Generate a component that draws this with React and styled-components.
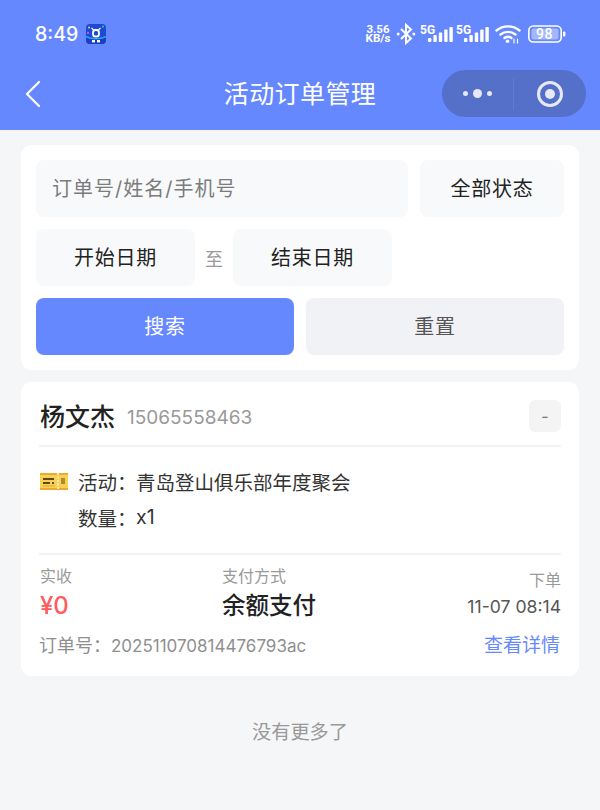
import React from "react";
import styled, { createGlobalStyle } from "styled-components";

const BLUE = "#6688ff";
const FONT = `Inter, "Noto Sans CJK SC", "Noto Sans", sans-serif`;
const COLON = "\uFF1A";

const GlobalStyle = createGlobalStyle`
  html, body {
    margin: 0;
    padding: 0;
    background: #f5f6f8;
    font-family: ${FONT};
  }
  * { box-sizing: border-box; }
`;

const Page = styled.div`
  width: 600px;
  height: 810px;
  overflow: hidden;
  background: #f5f6f8;
`;

const Header = styled.header`
  height: 130px;
  background: ${BLUE};
  color: #fff;
`;

const StatusBar = styled.div`
  height: 68px;
  padding: 22px 34px 0 35px;
  display: flex;
  align-items: flex-start;
  justify-content: space-between;
`;

const StatusLeft = styled.div`
  display: flex;
  align-items: center;
  gap: 8px;
  height: 24px;
`;

const Clock = styled.span`
  font-size: 19.5px;
  font-weight: 500;
`;

const StatusRight = styled.div`
  display: flex;
  align-items: center;
  height: 24px;
  gap: 4px;
`;

const NetSpeed = styled.div`
  font-family: Roboto, sans-serif;
  font-size: 11.5px;
  line-height: 9.5px;
  font-weight: 700;
  text-align: center;
  width: 28px;
  white-space: nowrap;
`;

const Signal = styled.div`
  width: 33px;
  height: 18px;
  position: relative;
  font-family: Roboto, sans-serif;
  font-size: 12px;
  font-weight: 700;
  line-height: 10px;

  & + & {
    margin-left: -1px;
  }
`;

const Bars = styled.svg`
  position: absolute;
  right: 0;
  bottom: 1px;
`;

const WifiIcon = styled.svg`
  margin: 0 3px 0 2px;
`;

const NavBar = styled.div`
  height: 48px;
  padding: 3px 14px 0 24px;
  display: flex;
  align-items: center;
  justify-content: space-between;
  position: relative;
`;

const NavTitle = styled.h1`
  position: absolute;
  left: 0;
  right: 0;
  top: 8px;
  margin: 0;
  text-align: center;
  font-size: 25px;
  line-height: 36px;
  font-weight: 400;
  letter-spacing: 0.4px;
`;

const Capsule = styled.div`
  width: 144px;
  height: 47px;
  border-radius: 24px;
  background: #5570c9;
  display: flex;
  align-items: center;
`;

const CapsulePart = styled.div`
  width: 72px;
  height: 32px;
  display: flex;
  align-items: center;
  justify-content: center;
  gap: 5px;
  border-right: ${(p) => (p.$divider ? "1px solid #627bd0" : "none")};
`;

const Dot = styled.i`
  display: block;
  width: ${(p) => p.$size}px;
  height: ${(p) => p.$size}px;
  border-radius: 50%;
  background: #e6e9f5;
`;

const Content = styled.main`
  padding: 15px 21px 0;
  display: flex;
  flex-direction: column;
  gap: 12px;
`;

const Card = styled.section`
  background: #fff;
  border-radius: 11px;
`;

const FilterCard = styled(Card)`
  height: 225px;
  padding: 15px;
  display: flex;
  flex-direction: column;
  gap: 12px;
`;

const FilterRow = styled.div`
  display: flex;
  align-items: center;
  gap: ${(p) => p.$gap ?? 12}px;
`;

const Field = styled.div`
  height: 57px;
  width: ${(p) => (p.$width ? `${p.$width}px` : "auto")};
  flex: ${(p) => (p.$width ? "none" : 1)};
  background: #f8f9fb;
  border-radius: 8px;
  display: flex;
  align-items: center;
  justify-content: ${(p) => (p.$placeholder ? "flex-start" : "center")};
  padding: ${(p) => (p.$placeholder ? "0 16px 2px" : "0 0 2px")};
  font-size: 20px;
  letter-spacing: ${(p) => (p.$placeholder ? "1px" : "0.8px")};
  color: ${(p) => (p.$placeholder ? "#7c7c7c" : "#222")};
`;

const ToLabel = styled.span`
  width: 38px;
  font-size: 18px;
  color: #999;
  text-align: center;
`;

const Button = styled.button`
  flex: 1;
  height: 57px;
  border: none;
  border-radius: 8px;
  padding: 0 0 2px;
  font-family: inherit;
  font-size: 20px;
  letter-spacing: 0.8px;
  background: ${(p) => (p.$primary ? BLUE : "#f1f2f6")};
  color: ${(p) => (p.$primary ? "#fff" : "#555")};
`;

const OrderCard = styled(Card)`
  height: 294px;
  padding: 0 18px;
`;

const OrderHead = styled.div`
  height: 65px;
  display: flex;
  align-items: center;
  padding: 5px 0 0 1px;
  border-bottom: 2px solid #f3f3f4;
`;

const Name = styled.span`
  font-size: 25px;
  font-weight: 500;
  color: #222;
  margin-bottom: 2px;
`;

const Phone = styled.span`
  margin: 2px 0 0 12px;
  font-size: 19px;
  color: #999;
`;

const Tag = styled.span`
  margin-left: auto;
  width: 32px;
  height: 32px;
  border-radius: 6px;
  background: #f4f4f5;
  color: #777;
  font-size: 16px;
  display: flex;
  align-items: center;
  justify-content: center;
`;

const OrderBody = styled.div`
  height: 108px;
  padding: 16px 0 0 1px;
  border-bottom: 2px solid #f3f3f4;
`;

const InfoRow = styled.div`
  height: 36px;
  display: flex;
  align-items: center;
  font-size: 19.5px;
  color: #333;
`;

const InfoIcon = styled.div`
  width: 38px;
  flex: none;
  display: flex;
`;

const InfoLabel = styled.span`
  width: 58px;
  flex: none;
  white-space: nowrap;
`;

const OrderFoot = styled.div`
  display: grid;
  grid-template-columns: 182px 1fr auto;
  padding: 11px 0 0 1px;
`;

const Column = styled.div`
  display: flex;
  flex-direction: column;
  align-items: ${(p) => (p.$end ? "flex-end" : "flex-start")};
`;

const SmallLabel = styled.span`
  font-size: 16px;
  line-height: 20px;
  color: #999;
  margin-top: ${(p) => p.$top || 0}px;
`;

const Amount = styled.span`
  font-size: 24px;
  line-height: 40px;
  font-weight: 500;
  color: #ff5a5f;
`;

const PayMethod = styled.span`
  font-size: 23.5px;
  line-height: 40px;
  font-weight: 500;
  color: #222;
`;

const OrderTime = styled.span`
  font-size: 17.6px;
  line-height: 33px;
  color: #555;
`;

const OrderBottom = styled.div`
  display: flex;
  align-items: center;
  justify-content: space-between;
  margin-top: 4px;
`;

const OrderNo = styled.span`
  font-size: 18px;
  color: #8f8f8f;
`;

const OrderDigits = styled.span`
  font-size: 17px;
`;

const DetailLink = styled.a`
  font-size: 19px;
  color: ${BLUE};
  margin-right: 1px;
`;

const NoMore = styled.div`
  margin-top: 30px;
  text-align: center;
  font-size: 19.2px;
  line-height: 28px;
  color: #999;
`;

const AppBadge = () => (
  <svg width="20" height="20" viewBox="0 0 20 20">
    <rect width="20" height="20" rx="4" fill="#1c49d6" />
    <path d="M0 13 Q10 17 20 13 V16 A4 4 0 0 1 16 20 H4 A4 4 0 0 1 0 16Z" fill="#1a3fc0" />
    <path d="M0 12 Q10 16 20 12 V13.5 Q10 17.5 0 13.5Z" fill="#2fa6ee" />
    <circle cx="3" cy="3.5" r="1" fill="#ffd24a" />
    <circle cx="17" cy="2.5" r="1" fill="#43d66b" />
    <circle cx="2" cy="9" r="1" fill="#e85fd0" />
    <path d="M5.5 4 L7.5 6 H12.5 L14.5 4" fill="none" stroke="#fff" strokeWidth="1.2" />
    <rect x="7" y="6" width="6" height="6.5" rx="2.6" fill="none" stroke="#fff" strokeWidth="1.8" />
    <rect x="6" y="16" width="3" height="2.4" fill="#fff" />
    <rect x="11" y="16" width="3" height="2.4" fill="#fff" />
  </svg>
);

const Bluetooth = () => (
  <svg width="20" height="22" viewBox="0 0 20 22" fill="none" stroke="#fff" strokeWidth="2">
    <path d="M5 6 L15 15.5 L10 20 V2 L15 6.5 L5 16" />
    <circle cx="2.2" cy="11" r="1.5" fill="#fff" stroke="none" />
    <circle cx="17.8" cy="11" r="1.5" fill="#fff" stroke="none" />
  </svg>
);

const SignalBars = () => (
  <Bars width="25" height="15" viewBox="0 0 25 15" fill="#fff">
    <rect x="0" y="11" width="3.4" height="4" rx="1" />
    <rect x="5.4" y="8" width="3.4" height="7" rx="1" />
    <rect x="10.8" y="5.5" width="3.4" height="9.5" rx="1" />
    <rect x="16.2" y="2.5" width="3.4" height="12.5" rx="1" />
    <rect x="21.4" y="0" width="3.4" height="15" rx="1" />
  </Bars>
);

const Wifi = () => (
  <WifiIcon width="26" height="20" viewBox="0 0 26 20" fill="none" stroke="#fff" strokeWidth="2.4" strokeLinecap="round">
    <path d="M1.5 6.5 C8 1 18 1 24.5 6.5" />
    <path d="M5.5 10.5 C10 7 16 7 20.5 10.5" />
    <path d="M9.5 14 C11.5 12.6 14.5 12.6 16.5 14" />
    <circle cx="12.5" cy="17.2" r="1.8" fill="#fff" stroke="none" />
    <path d="M19 15 V19 M22.5 15 V19" strokeWidth="1.2" />
  </WifiIcon>
);

const Battery = () => (
  <svg width="38" height="18" viewBox="0 0 38 18">
    <rect x="0.8" y="1" width="32.4" height="16" rx="4.5" fill="none" stroke="#fff" strokeWidth="1.6" />
    <rect x="3.5" y="3.5" width="27" height="11" rx="2" fill="#a3b7ff" />
    <rect x="35" y="6.5" width="2.4" height="5" rx="1" fill="#fff" />
    <text x="16.5" y="14" textAnchor="middle" fontFamily="Roboto, sans-serif" fontSize="14" fontWeight="500" letterSpacing="0.5" fill="#fff">98</text>
  </svg>
);

const Ticket = () => (
  <svg width="28" height="17" viewBox="0 0 28 17">
    <rect width="28" height="17" rx="1" fill="#f9cf56" />
    <rect width="28" height="2" fill="#eeaa2e" />
    <rect y="15" width="28" height="2" fill="#eeaa2e" />
    <rect x="3" y="5" width="11" height="2" fill="#5c4a1a" />
    <rect x="3" y="9" width="7" height="2" fill="#5c4a1a" />
    <rect x="12" y="9" width="2" height="2" fill="#5c4a1a" />
    <rect x="3" y="12.5" width="12" height="1" fill="#e0a83a" />
    <path d="M18 0 V17" stroke="#fff6d8" strokeWidth="1.6" strokeDasharray="2 1.5" />
    <rect x="21" y="5" width="4" height="6" fill="#b08a2e" />
  </svg>
);

export default function App() {
  return (
    <Page>
      <GlobalStyle />
      <Header>
        <StatusBar>
          <StatusLeft>
            <Clock>8:49</Clock>
            <AppBadge />
          </StatusLeft>
          <StatusRight>
            <NetSpeed>
              3.56
              <br />
              KB/s
            </NetSpeed>
            <Bluetooth />
            <Signal>
              5G
              <SignalBars />
            </Signal>
            <Signal>
              5G
              <SignalBars />
            </Signal>
            <Wifi />
            <Battery />
          </StatusRight>
        </StatusBar>
        <NavBar>
          <svg width="18" height="28" viewBox="0 0 18 28" fill="none" stroke="#fff" strokeWidth="2.2" strokeLinecap="round" strokeLinejoin="round">
            <path d="M15 2 L3 14 L15 26" />
          </svg>
          <NavTitle>活动订单管理</NavTitle>
          <Capsule>
            <CapsulePart $divider>
              <Dot $size={5} />
              <Dot $size={9} />
              <Dot $size={5} />
            </CapsulePart>
            <CapsulePart>
              <svg width="28" height="28" viewBox="0 0 28 28">
                <circle cx="14" cy="14" r="11.5" fill="none" stroke="#e6e9f5" strokeWidth="3" />
                <circle cx="14" cy="14" r="5" fill="#e6e9f5" />
              </svg>
            </CapsulePart>
          </Capsule>
        </NavBar>
      </Header>

      <Content>
        <FilterCard>
          <FilterRow>
            <Field $placeholder>订单号/姓名/手机号</Field>
            <Field $width={144}>全部状态</Field>
          </FilterRow>
          <FilterRow $gap={0}>
            <Field $width={159}>开始日期</Field>
            <ToLabel>至</ToLabel>
            <Field $width={159}>结束日期</Field>
          </FilterRow>
          <FilterRow>
            <Button $primary>搜索</Button>
            <Button>重置</Button>
          </FilterRow>
        </FilterCard>

        <OrderCard>
          <OrderHead>
            <Name>杨文杰</Name>
            <Phone>15065558463</Phone>
            <Tag>-</Tag>
          </OrderHead>
          <OrderBody>
            <InfoRow>
              <InfoIcon>
                <Ticket />
              </InfoIcon>
              <InfoLabel>活动{COLON}</InfoLabel>
              <span>青岛登山俱乐部年度聚会</span>
            </InfoRow>
            <InfoRow>
              <InfoIcon />
              <InfoLabel>数量{COLON}</InfoLabel>
              <span>x1</span>
            </InfoRow>
          </OrderBody>
          <OrderFoot>
            <Column>
              <SmallLabel>实收</SmallLabel>
              <Amount>¥0</Amount>
            </Column>
            <Column>
              <SmallLabel>支付方式</SmallLabel>
              <PayMethod>余额支付</PayMethod>
            </Column>
            <Column $end>
              <SmallLabel $top={4}>下单</SmallLabel>
              <OrderTime>11-07 08:14</OrderTime>
            </Column>
          </OrderFoot>
          <OrderBottom>
            <OrderNo>
              订单号{COLON}
              <OrderDigits>202511070814476793ac</OrderDigits>
            </OrderNo>
            <DetailLink>查看详情</DetailLink>
          </OrderBottom>
        </OrderCard>

        <NoMore>没有更多了</NoMore>
      </Content>
    </Page>
  );
}
